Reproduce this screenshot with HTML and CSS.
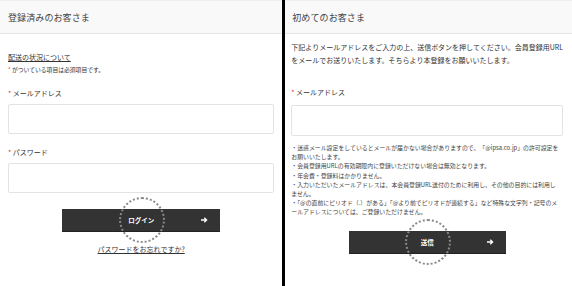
FILE: index.html
```html
<!DOCTYPE html>
<html lang="ja">
<head>
<meta charset="utf-8">
<title>ログイン</title>
<link rel="stylesheet" href="styles.css">
</head>
<body>
<div class="page">
  <section class="panel panel-left">
    <div class="panel-head">登録済みのお客さま</div>
    <div class="panel-body">
      <a class="link status-link" href="#">配送の状況について</a>
      <p class="req-note"><span class="req">*</span> がついている項目は必須項目です。</p>
      <label class="field-label"><span class="req">*</span> メールアドレス</label>
      <div class="input"></div>
      <label class="field-label label-pass"><span class="req">*</span> パスワード</label>
      <div class="input"></div>
      <div class="btn-wrap">
        <button class="btn btn-login">
          <span class="btn-text">ログイン</span>
          <svg class="arrow" width="7" height="6" viewBox="0 0 7 6"><path d="M0 3H5.5M3.3 0.8L5.6 3L3.3 5.2" fill="none" stroke="#fff" stroke-width="1.3"/></svg>
          <span class="ring"></span>
        </button>
      </div>
      <div class="forgot-wrap"><a class="link forgot" href="#">パスワードをお忘れですか?</a></div>
    </div>
  </section>
  <div class="divider"></div>
  <section class="panel panel-right">
    <div class="panel-head">初めてのお客さま</div>
    <div class="panel-body body-right">
      <p class="intro"><span>下記よりメールアドレスをご入力の上、送信ボタンを押してください。会員登録用URL</span><span>をメールでお送りいたします。そちらより本登録をお願いいたします。</span></p>
      <label class="field-label label-right"><span class="req">*</span> メールアドレス</label>
      <div class="input input-right"></div>
      <ul class="notes">
        <li>・迷惑メール設定をしているとメールが届かない場合がありますので、「@ipsa.co.jp」の許可設定を</li>
        <li>お願いいたします。</li>
        <li>・会員登録用URLの有効期限内に登録いただけない場合は無効となります。</li>
        <li>・年会費・登録料はかかりません。</li>
        <li>・入力いただいたメールアドレスは、本会員登録URL送付のために利用し、その他の目的には利用し</li>
        <li>ません。</li>
        <li>・「@の直前にピリオド（.）がある」「@より前でピリオドが連続する」など特殊な文字列・記号のメ</li>
        <li>ールアドレスについては、ご登録いただけません。</li>
      </ul>
      <div class="btn-wrap btn-wrap-right">
        <button class="btn btn-send">
          <span class="btn-text">送信</span>
          <svg class="arrow" width="7" height="6" viewBox="0 0 7 6"><path d="M0 3H5.5M3.3 0.8L5.6 3L3.3 5.2" fill="none" stroke="#fff" stroke-width="1.3"/></svg>
          <span class="ring"></span>
        </button>
      </div>
    </div>
  </section>
</div>
</body>
</html>
```
FILE: styles.css
```css
* { box-sizing: border-box; }
html, body { margin: 0; padding: 0; }
body {
  width: 572px;
  height: 286px;
  overflow: hidden;
  background: #fff;
  font-family: "Noto Sans CJK JP", "Noto Sans", sans-serif;
  color: #333;
}
.page {
  display: flex;
  height: 286px;
}
.panel {
  display: flex;
  flex-direction: column;
}
.panel-left { width: 285px; }
.panel-right { flex: 1; }
.divider {
  width: 3px;
  background: #000;
}
.panel-head {
  height: 34px;
  background: #f9f9f9;
  border-top: 1px solid #f0f0f0;
  border-bottom: 1px solid #e6e6e6;
  display: flex;
  align-items: center;
  padding-left: 8px;
  font-size: 9px;
  color: #444;
  letter-spacing: 0.1px;
}
.panel-right .panel-head { padding-left: 7px; }
.panel-body {
  display: flex;
  flex-direction: column;
  padding: 0 8px 0 8px;
}
.body-right { padding: 0 9px 0 6px; }
.link {
  color: #333;
  text-decoration: underline;
  font-size: 7px;
  line-height: 10px;
}
.status-link {
  margin-top: 18px;
  align-self: flex-start;
}
.req-note {
  margin: 3px 0 0 0;
  font-size: 5.8px;
  line-height: 10px;
}
.req { color: #d33; }
.field-label {
  display: block;
  font-size: 7px;
  line-height: 10px;
  margin-top: 13px;
  color: #333;
}
.label-pass { margin-top: 13px; }
.input {
  margin-top: 6px;
  height: 30px;
  border: 1px solid #e3e3e3;
  border-radius: 2px;
  background: #fff;
}
.btn-wrap {
  display: flex;
  justify-content: center;
  margin-top: 16px;
}
.btn {
  position: relative;
  width: 158px;
  height: 23px;
  background: #333;
  border: 0;
  border-bottom: 1px solid #222;
  padding: 0;
  display: flex;
  align-items: center;
  justify-content: center;
  font-family: inherit;
  cursor: pointer;
}
.btn-text {
  color: #fff;
  font-size: 6.5px;
  font-weight: bold;
}
.arrow {
  position: absolute;
  right: 12px;
  top: 8px;
}
.ring {
  position: absolute;
  left: 50%;
  top: 50%;
  width: 46px;
  height: 46px;
  margin: -23px 0 0 -22px;
  border: 2px dotted #8a8a8a;
  border-radius: 50%;
}
.forgot-wrap {
  display: flex;
  justify-content: center;
  margin-top: 12px;
}
.forgot { font-size: 7px; }
.intro {
  margin: 7px 0 0 0;
  font-size: 7px;
  line-height: 13px;
  display: flex;
  flex-direction: column;
  white-space: nowrap;
}
.label-right { margin-top: 20px; }
.input-right { height: 31px; margin-top: 8px; }
.notes {
  list-style: none;
  margin: 7px 0 0 0;
  padding: 0;
  font-size: 5.9px;
  line-height: 9.2px;
  white-space: nowrap;
  color: #444;
}
.btn-wrap-right { margin-top: 14px; }
.btn-send { width: 157px; }
```
